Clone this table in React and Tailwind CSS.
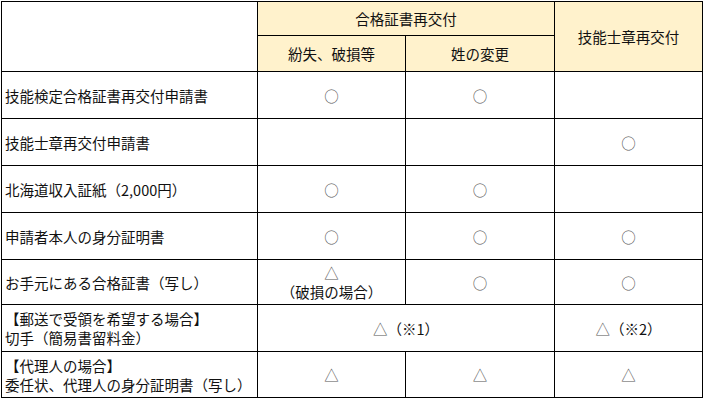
import React from "react";

const font = { fontFamily: '"Noto Sans CJK JP", "Noto Sans", sans-serif' };

const rows = [
  { label: "技能検定合格証書再交付申請書", a: "○", b: "○", c: "" },
  { label: "技能士章再交付申請書", a: "", b: "", c: "○" },
  { label: "北海道収入証紙（2,000円）", a: "○", b: "○", c: "" },
  { label: "申請者本人の身分証明書", a: "○", b: "○", c: "○" },
];

function Mark({ v }) {
  return v ? <span className="text-[#555]">{v}</span> : null;
}

export default function App() {
  const cell = "border border-black text-center align-middle p-0";
  const lcell = "border border-black text-left align-middle pl-[3px] pr-0 py-0";
  return (
    <div className="w-[704px] h-[400px] bg-white pl-px pt-px" style={font}>
      <table className="table-fixed border-collapse text-[14.5px] leading-[19px] text-[#111]">
        <colgroup>
          <col className="w-[256px]" />
          <col className="w-[148px]" />
          <col className="w-[149px]" />
          <col className="w-[148px]" />
        </colgroup>
        <tbody>
          <tr className="h-[34px]">
            <td rowSpan={2} className="border border-black"></td>
            <td colSpan={2} className={`${cell} bg-[#fff2cc]`}>合格証書再交付</td>
            <td rowSpan={2} className={`${cell} bg-[#fff2cc]`}>技能士章再交付</td>
          </tr>
          <tr className="h-[36px]">
            <td className={`${cell} bg-[#fff2cc]`}>紛失、破損等</td>
            <td className={`${cell} bg-[#fff2cc]`}>姓の変更</td>
          </tr>
          {rows.map((r) => (
            <tr key={r.label} className="h-[47px]">
              <td className={lcell}>{r.label}</td>
              <td className={cell}><Mark v={r.a} /></td>
              <td className={cell}><Mark v={r.b} /></td>
              <td className={cell}><Mark v={r.c} /></td>
            </tr>
          ))}
          <tr className="h-[45px]">
            <td className={lcell}>お手元にある合格証書（写し）</td>
            <td className={cell}>
              <div className="text-[#555]">△</div>
              <div>（破損の場合）</div>
            </td>
            <td className={cell}><Mark v="○" /></td>
            <td className={cell}><Mark v="○" /></td>
          </tr>
          <tr className="h-[47px]">
            <td className={lcell}>
              <div>【郵送で受領を希望する場合】</div>
              <div>切手（簡易書留料金）</div>
            </td>
            <td colSpan={2} className={cell}><span className="text-[#555]">△</span>（※1）</td>
            <td className={cell}><span className="text-[#555]">△</span>（※2）</td>
          </tr>
          <tr className="h-[46px]">
            <td className={lcell}>
              <div>【代理人の場合】</div>
              <div>委任状、代理人の身分証明書（写し）</div>
            </td>
            <td className={cell}><Mark v="△" /></td>
            <td className={cell}><Mark v="△" /></td>
            <td className={cell}><Mark v="△" /></td>
          </tr>
        </tbody>
      </table>
    </div>
  );
}
